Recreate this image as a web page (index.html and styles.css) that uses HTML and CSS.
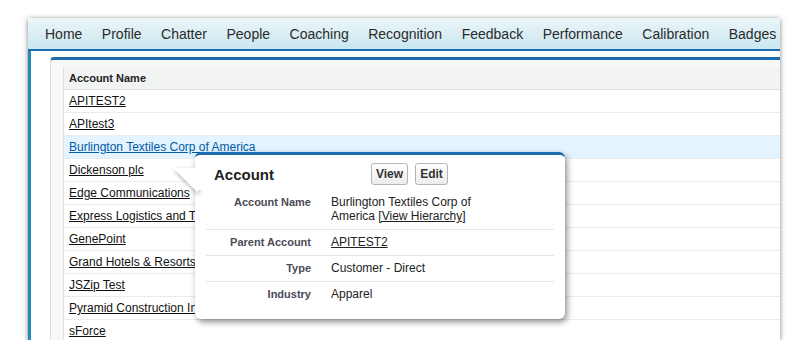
FILE: index.html
```html
<!DOCTYPE html>
<html lang="en">

<head>
    <meta charset="UTF-8">
    <title>Accounts</title>
    <link rel="stylesheet" href="styles.css">
</head>

<body>
    <div id="frame">
        <div id="tabs">
            <span>Home</span>
            <span>Profile</span>
            <span>Chatter</span>
            <span>People</span>
            <span>Coaching</span>
            <span>Recognition</span>
            <span>Feedback</span>
            <span>Performance</span>
            <span>Calibration</span>
            <span>Badges</span>
        </div>

        <div id="main">
            <div id="panel">
                <div class="lista">
                    <div class="fila cabecera">Account Name</div>
                    <div class="fila"><a href="#">APITEST2</a></div>
                    <div class="fila"><a href="#">APItest3</a></div>
                    <div class="fila activa"><a href="#">Burlington Textiles Corp of America</a></div>
                    <div class="fila"><a href="#">Dickenson plc</a></div>
                    <div class="fila"><a href="#">Edge Communications</a></div>
                    <div class="fila"><a href="#">Express Logistics and Transport</a></div>
                    <div class="fila"><a href="#">GenePoint</a></div>
                    <div class="fila"><a href="#">Grand Hotels &amp; Resorts Ltd</a></div>
                    <div class="fila"><a href="#">JSZip Test</a></div>
                    <div class="fila"><a href="#">Pyramid Construction Inc.</a></div>
                    <div class="fila"><a href="#">sForce</a></div>
                </div>
            </div>
        </div>

        <!-- hover card -->
        <div id="popup">
            <svg class="punta" width="26" height="28" viewBox="0 0 26 28">
                <polygon points="1,1 26,1 26,26" fill="#fff" />
            </svg>
            <div class="pop-head">
                <h2>Account</h2>
                <button>View</button>
                <button>Edit</button>
            </div>
            <div class="datos">
                <div class="dato">
                    <span class="etiqueta">Account Name</span>
                    <span class="valor">Burlington Textiles Corp of<br>America <a href="#">[View Hierarchy]</a></span>
                </div>
                <div class="dato">
                    <span class="etiqueta">Parent Account</span>
                    <span class="valor"><a href="#">APITEST2</a></span>
                </div>
                <div class="dato">
                    <span class="etiqueta">Type</span>
                    <span class="valor">Customer - Direct</span>
                </div>
                <div class="dato">
                    <span class="etiqueta">Industry</span>
                    <span class="valor">Apparel</span>
                </div>
            </div>
        </div>
    </div>
</body>

</html>
```

FILE: styles.css
```css
body {
    margin: 0;
    background-color: #fff;
    font-family: 'Liberation Sans', Arial, sans-serif;
    color: #222;
}

#frame {
    position: relative;
    margin: 18px 0 0 28px;
    width: 752px;
    height: 322px;
    overflow: hidden;
    background-color: #fff;
    box-shadow: 0 1px 5px rgba(0, 0, 0, 0.5);
}

#tabs {
    display: flex;
    align-items: center;
    gap: 19.5px;
    height: 31px;
    padding-left: 17px;
    background: linear-gradient(#ecf6f9, #c9e6ef);
    border-top-left-radius: 4px;
    border-bottom: 2px solid #1a6bb0;
    font-size: 14px;
    color: #2b2b2b;
    white-space: nowrap;
}

#main {
    height: 289px;
    padding: 6px 0 0 19px;
    border-left: 3px solid #2489b6;
    box-sizing: border-box;
}

#panel {
    height: 100%;
    padding: 7px 0 0 12px;
    background-color: #f8f8f8;
    border-top: 3px solid #1a6bb0;
    border-left: 1px solid #dcdcdc;
    border-top-left-radius: 4px;
}

.lista {
    background-color: #fff;
    border-left: 1px solid #e0e0e0;
    font-size: 12px;
}

.fila {
    height: 22px;
    line-height: 22px;
    padding-left: 5px;
    border-bottom: 1px solid #ececec;
}

.cabecera {
    background-color: #f2f3f3;
    font-size: 11px;
    font-weight: bold;
    border-bottom-color: #e0e0e0;
}

.fila a {
    color: #111;
}

.activa {
    background-color: #e3f3ff;
}

.activa a {
    color: #015ba7;
}

#popup {
    position: absolute;
    left: 167px;
    top: 134px;
    width: 370px;
    height: 164px;
    background-color: #fff;
    border-top: 3px solid #1a6bb0;
    border-radius: 6px;
    box-shadow: 2px 3px 6px rgba(0, 0, 0, 0.45);
}

.punta {
    position: absolute;
    left: -23px;
    top: 12px;
    filter: drop-shadow(1px 2px 2px rgba(0, 0, 0, 0.35));
}

.pop-head {
    position: relative;
    display: flex;
    align-items: center;
    gap: 7px;
    padding: 8px 0 5px 19px;
    background-color: #fff;
    border-radius: 6px 6px 0 0;
}

.pop-head h2 {
    width: 150px;
    margin: 0;
    font-size: 15px;
    color: #222;
}

button {
    height: 22px;
    padding: 0 4px;
    font-family: inherit;
    font-size: 12px;
    font-weight: bold;
    color: #333;
    background: linear-gradient(#fff, #ececec);
    border: 1px solid #b5b5b5;
    border-radius: 3px;
}

.datos {
    padding: 0 11px;
    font-size: 12px;
    line-height: 14px;
}

.dato {
    display: flex;
    gap: 20px;
    padding: 5px 0 6px;
    border-bottom: 1px solid #e6e6e6;
}

.dato:last-child {
    border-bottom: none;
}

.etiqueta {
    width: 105px;
    text-align: right;
    font-size: 11px;
    font-weight: bold;
    color: #4a4a56;
}

.valor {
    width: 180px;
    color: #222;
}

.valor a {
    color: #222;
}
```
